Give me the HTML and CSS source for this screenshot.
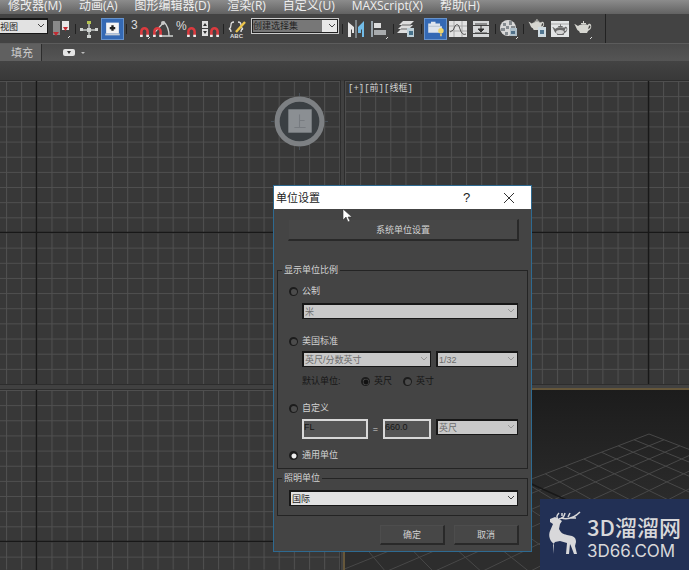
FILE: index.html
```html
<!DOCTYPE html>
<html lang="zh-CN">
<head>
<meta charset="utf-8">
<title>单位设置</title>
<link rel="stylesheet" href="styles.css">
</head>
<body>
<svg class="defs" aria-hidden="true">
  <defs>
    <symbol id="chevron" viewBox="0 0 8 6"><path d="M1 1l3 3 3-3" fill="none" stroke="currentColor"/></symbol>
    <symbol id="magnet" viewBox="0 0 8 9"><path d="M1.2 8V4a2.8 2.8 0 0 1 5.6 0v4" fill="none" stroke="#dc3a3e" stroke-width="2.3"/><path d="M0 8h2.4M5.6 8h2.4" stroke="#eee" stroke-width="2"/></symbol>
    <symbol id="teapot" viewBox="0 0 18 13"><path d="M4 5C2 4 2 3 0 3c2 1 2 6 5 7l1 2h7l1-2c2-1 4-3 3-6-1-2-3-1-3 0-2-1-8-1-10 1zm11 0c1-1 2 0 1 2l-2 1zM7 3h5V2h-2V0H9v2H7z" fill="currentColor"/></symbol>
  </defs>
</svg>

<nav class="menubar">
  <a href="#">修改器(M)</a><a href="#">动画(A)</a><a href="#">图形编辑器(D)</a><a href="#">渲染(R)</a><a href="#">自定义(U)</a><a href="#">MAXScript(X)</a><a href="#">帮助(H)</a>
</nav>

<div class="toolbar-row">
  <div class="toolbar">
    <span class="combo combo-view"><select aria-label="参考坐标系"><option>视图</option></select><svg class="chevron"><use href="#chevron"/></svg></span>
    <button class="tool" aria-label="轴点中心"><svg viewBox="0 0 22 22"><path d="M3 3h7v14H3z" fill="#898989"/><path d="M12 3h7v9h-7z" fill="#e6e6e6"/><path d="M3 14h6l-3 4zM13 9h5l-2.500 4z" fill="#c22b32"/><path d="M18 20l2-2" stroke="#ddd"/></svg></button>
    <i class="sep"></i>
    <button class="tool" aria-label="操纵"><svg viewBox="0 0 22 22"><path d="M11 4v15M3 12h16" stroke="#c4c8c6" stroke-width="1.4"/><path d="M9 10h4v4H9zM2 10h3v3H2zM17 10h3v3h-3zM9 17h4v3H9z" fill="#d0d3d1"/><path d="M9 3h4v3H9z" fill="#b5c552"/></svg></button>
    <button class="tool active" aria-label="键盘快捷键覆盖"><svg viewBox="0 0 22 22"><path d="M4 4h14v12H4z" fill="#f4f4f4"/><path d="M3 17h16" stroke="#c3cbd5" stroke-width="2"/><path d="M11 7v6M8 10h6" stroke="#222" stroke-width="2.6"/></svg></button>
    <i class="sep"></i>
    <button class="tool" aria-label="捕捉开关"><svg viewBox="0 0 22 22"><text x="2" y="11" class="glyph">3</text><use href="#magnet" x="11" y="9" width="9" height="10"/><path d="M19 21l2-2" stroke="#ddd"/></svg></button>
    <button class="tool" aria-label="角度捕捉"><svg viewBox="0 0 22 22"><path d="M3 14L12 4q5 5 5 14h4M9 18h8" fill="none" stroke="#cfd2d0" stroke-width="1.3"/><circle cx="11" cy="5" r="2" fill="#c9c9c9"/><use href="#magnet" x="1" y="9" width="9" height="10"/></svg></button>
    <button class="tool" aria-label="百分比捕捉"><svg viewBox="0 0 22 22"><text x="1" y="12" class="glyph">%</text><use href="#magnet" x="12" y="9" width="9" height="10"/></svg></button>
    <button class="tool" aria-label="微调器捕捉"><svg viewBox="0 0 22 22"><path d="M4 3h6v7H4zM4 11h6v7H4z" fill="#e0e0e0"/><path d="M5 8l2-3 2 3zM5 13l2 3 2-3z" fill="#333"/><use href="#magnet" x="12" y="9" width="9" height="10"/></svg></button>
    <i class="sep"></i>
    <button class="tool" aria-label="编辑命名选择集"><svg viewBox="0 0 22 22"><path d="M8 4Q5 4 5 7t-2 4q2 0 2 3M12 4q3 0 3 3t2 4q-2 0-2 3" fill="none" stroke="#ddd" stroke-width="1.3"/><path d="M10 14L19 4" stroke="#eec64b" stroke-width="2.4"/><text x="4" y="20" class="tiny">ABC</text></svg></button>
    <span class="combo combo-set"><select aria-label="命名选择集"><option>创建选择集</option></select><svg class="chevron"><use href="#chevron"/></svg></span>
    <i class="sep"></i>
    <button class="tool" aria-label="镜像"><svg viewBox="0 0 22 22"><path d="M3 4l6 5v6H7v-3l-1-1v8H3z" fill="#e4e4e4"/><path d="M11 2v18" stroke="#b9c7cf"/><path d="M19 3l-6 6v6h3v-3l1-1v8h2z" fill="#72bce8"/></svg></button>
    <button class="tool" aria-label="对齐"><svg viewBox="0 0 22 22"><path d="M4 3v16" stroke="#b8c7d0" stroke-width="1.5"/><path d="M6 5h7v5H6z" fill="#ddd"/><path d="M6 12h12v5H6z" fill="#a8abad"/><path d="M18 21l2-2" stroke="#ddd"/></svg></button>
    <i class="sep"></i>
    <button class="tool" aria-label="层管理器"><svg viewBox="0 0 22 22"><path d="M7 3h11l-4 4H3zM6 7h11l-4 4H2zM5 11h10l-4 4H1z" fill="#dedede"/><path d="M6 7h9M5 11h8" stroke="#666"/><path d="M11 10h7v9h-7z" fill="#bfd0d8"/><path d="M13 13h4v4h-4z" fill="#47728b"/></svg></button>
    <i class="sep"></i>
    <button class="tool active" aria-label="功能区"><svg viewBox="0 0 22 22"><path d="M3 8V5h3V3h5v2h5v3h2v7H3z" fill="#dfe5ed"/><path d="M3 8h14" stroke="#b3bfcc"/><circle cx="17" cy="13" r="3" fill="#efd66d"/><path d="M16 16h2v3h-2z" fill="#d9c078"/></svg></button>
    <button class="tool" aria-label="曲线编辑器"><svg viewBox="0 0 22 22"><path d="M2 3h18v16H2z" fill="#e2e2e2"/><path d="M2 8h18M2 13h18M7 3v16M15 3v16" stroke="#aaa"/><path d="M3 14q4-1 5-6 3-4 5 3t6 5" fill="none" stroke="#555"/></svg></button>
    <button class="tool" aria-label="图解视图"><svg viewBox="0 0 22 22"><path d="M3 3h16v4H3zM3 8h16v7H3zM3 16h16v3H3z" fill="#d5d7d8"/><path d="M5 6h12M5 15h12" stroke="#444"/><path d="M11 7v5M8 11h6l-3 3z" stroke="#333" fill="#333"/></svg></button>
    <i class="sep"></i>
    <button class="tool" aria-label="材质编辑器"><svg viewBox="0 0 22 22"><circle cx="10" cy="10" r="8" fill="#d8d8d8"/><path d="M5 5h3v3H5zM11 3h3v4h-3zM8 8h3v3H8zM3 10h4v3H3zM13 8h4v3h-4zM7 14h3v3H7z" fill="#858b90"/><path d="M12 10h7v8h-7z" fill="#aebfca"/><path d="M13 13h4v3h-4z" fill="#50718a"/><path d="M18 21l2-2" stroke="#ddd"/></svg></button>
    <i class="sep"></i>
    <button class="tool" aria-label="渲染设置"><svg viewBox="0 0 22 22"><use href="#teapot" x="2" y="1" width="17" height="12"/><path d="M12 9h8v10h-8z" fill="#cfdbe1"/><path d="M14 12h4v4h-4z" fill="#527792"/></svg></button>
    <button class="tool" aria-label="渲染帧窗口"><svg viewBox="0 0 22 22"><path d="M2 3h18v16H2z" fill="#e3e5e6"/><path d="M2 6h18" stroke="#aaa"/><g color="#686868"><use href="#teapot" x="3" y="6" width="16" height="12"/></g><ellipse cx="11" cy="14" rx="4" ry="2" fill="#d5d5d5"/></svg></button>
    <button class="tool" aria-label="渲染产品"><svg viewBox="0 0 22 22"><use href="#teapot" x="2" y="3" width="18" height="13"/><path d="M18 21l2-2" stroke="#ddd"/></svg></button>
  </div>
</div>

<div class="ribbon">
  <button class="tab">填充</button>
  <button class="ribbon-toggle" aria-label="最小化功能区"><svg viewBox="0 0 22 8"><rect width="12" height="7" rx="2" fill="#e5e5e5"/><path d="M4 2h4L6 5z" fill="#333"/><path d="M18 3h4l-2 2z" fill="#bbb"/></svg></button>
</div>
<div class="ribbon-panel"></div>

<main class="viewports">
  <section class="viewport">
    <svg class="scene"><defs><pattern id="g1" x="6" y="0" width="15.15" height="15.15" patternUnits="userSpaceOnUse"><path d="M.5 0v15.15M0 .5h15.15" class="grid-line"/></pattern></defs>
      <rect width="100%" height="100%" fill="url(#g1)"/><path d="M36.5 0v400M0 151.5h400" class="axis"/></svg>
    <svg class="viewcube" viewBox="0 0 56 56"><circle cx="28" cy="28" r="22" fill="#3a3f43" stroke="#7d8083" stroke-width="5"/><path d="M17 16h23v23H17z" fill="#8b8f93"/><path d="M28 21v13M28 27h5M23 34h11" stroke="#777b80" fill="none"/><path d="M28 0v3M28 53v3M0 28h3M53 28h3" stroke="#485058"/></svg>
  </section>
  <section class="viewport">
    <svg class="scene"><defs><pattern id="g2" x="15" y="0" width="15.15" height="15.15" patternUnits="userSpaceOnUse"><path d="M.5 0v15.15M0 .5h15.15" class="grid-line"/></pattern></defs>
      <rect width="100%" height="100%" fill="url(#g2)"/><path d="M303.500 0v400M0 151.5h400" class="axis"/></svg>
    <span class="view-label">[+][前][线框]</span>
  </section>
  <section class="viewport">
    <svg class="scene"><defs><pattern id="g3" x="6" y="0" width="15.15" height="15.15" patternUnits="userSpaceOnUse"><path d="M.5 0v15.15M0 .5h15.15" class="grid-line"/></pattern></defs>
      <rect width="100%" height="100%" fill="url(#g3)"/><path d="M36.5 0v400M0 151.5h400" class="axis"/></svg>
  </section>
  <section class="viewport perspective">
    <svg class="scene"><path id="floor" class="floor-line"/><path d="M180 91l70 32" class="axis"/></svg>
  </section>
</main>

<form class="dialog" role="dialog" aria-labelledby="dialog-title">
  <header class="titlebar">
    <h1 id="dialog-title">单位设置</h1>
    <button type="button" class="caption help" aria-label="帮助">?</button>
    <button type="button" class="caption" aria-label="关闭"><svg viewBox="0 0 10 10"><path d="M0 0l10 10M10 0L0 10" stroke="#333" fill="none"/></svg></button>
  </header>
  <div class="dialog-body">
    <button type="button" class="push system">系统单位设置</button>
    <fieldset class="scale">
      <legend>显示单位比例</legend>
      <label class="choice"><input type="radio" name="scale">公制</label>
      <div class="fields"><span class="combo off wide"><select aria-label="公制单位" disabled><option>米</option></select><svg class="chevron"><use href="#chevron"/></svg></span></div>
      <label class="choice us"><input type="radio" name="scale">美国标准</label>
      <div class="fields"><span class="combo off first"><select aria-label="美国标准单位" disabled><option>英尺/分数英寸</option></select><svg class="chevron"><use href="#chevron"/></svg></span><span class="combo off second"><select aria-label="分数精度" disabled><option>1/32</option></select><svg class="chevron"><use href="#chevron"/></svg></span></div>
      <div class="defaults"><span>默认单位:</span><label class="choice"><input type="radio" name="base" checked>英尺</label><label class="choice"><input type="radio" name="base">英寸</label></div>
      <label class="choice custom"><input type="radio" name="scale">自定义</label>
      <div class="fields custom-fields"><div class="equation"><input type="text" class="unit-name" aria-label="单位名称" value="FL"><span>=</span><input type="text" class="unit-value" aria-label="单位数值" value="660.0"></div><span class="combo off second"><select aria-label="自定义基准单位" disabled><option>英尺</option></select><svg class="chevron"><use href="#chevron"/></svg></span></div>
      <label class="choice generic"><input type="radio" name="scale" checked>通用单位</label>
    </fieldset>
    <fieldset class="lighting">
      <legend>照明单位</legend>
      <span class="combo wide"><select aria-label="照明单位"><option>国际</option></select><svg class="chevron"><use href="#chevron"/></svg></span>
    </fieldset>
    <footer class="actions"><button type="button" class="push">确定</button><button type="button" class="push">取消</button></footer>
  </div>
</form>

<svg class="pointer" viewBox="0 0 10 15" aria-hidden="true"><path d="M1 1v11l3-3 2 5 2-1-2-4h4z" fill="#fff" stroke="#333" stroke-width=".6"/></svg>

<aside class="brand">
  <svg class="deer" viewBox="0 0 34 46" aria-hidden="true"><path d="M2 8l5-2 4 2 3 2-2 3-1 5c2 4 4 5 8 6l5 1c3 1 4 3 4 6l-1 4 2 8h-3l-3-8-1-2-1 10h-3l1-11-7-2-5 1-2 3v9H5l1-10c-4-3-6-8-4-13l3-7-3-2z" fill="#d8d8da"/><path d="M10 8C8 6 9 4 11 2M11 8c5-1 5-3 6-6M13 7c7 2 13 0 19-6M20 6l2-4M23 7l5 0M14 5V2" fill="none" stroke="#d8d8da" stroke-width="1.5"/></svg>
  <div class="brand-text"><strong>3D溜溜网</strong><span>3D66.COM</span></div>
</aside>
<script src="floor.js"></script>
</body>
</html>
```
FILE: styles.css
```css
* { box-sizing: border-box; }

body {
  margin: 0;
  min-height: 100vh;
  display: flex;
  flex-direction: column;
  position: relative;
  overflow: hidden;
  background: #414141;
  color: #d2d2d2;
  font: 9px/14px "Liberation Sans", "Noto Sans CJK SC", sans-serif;
}

button, select, input { font: inherit; color: inherit; margin: 0; padding: 0; border: 0; border-radius: 0; }
svg { display: block; }
.defs { position: absolute; width: 0; height: 0; }

.menubar {
  display: flex;
  gap: 17px;
  height: 14px;
  padding-left: 8px;
  background: linear-gradient(#8c8c8c, #626262);
  font: 12px/12px "Open Sans", "Noto Sans CJK SC", sans-serif;
}
.menubar a { color: #eee; text-decoration: none; white-space: nowrap; }

.toolbar-row { display: flex; background: #434343; border-bottom: 1px solid #5c5c5c; }
.toolbar { display: flex; height: 29px; padding: 4px 10px 0 0; border-right: 1px solid #222; }
.tool { width: 23px; height: 22px; flex: none; background: none; color: #d6d6d0; }
.tool svg { width: 22px; height: 22px; }
.tool.active { background: #3469b4; border: 1px solid #6793cc; }
.tool.active svg { width: 21px; height: 20px; }
.glyph { font: 12px "Liberation Sans", sans-serif; fill: #ddd; }
.tiny { font: bold 6px "Liberation Sans", sans-serif; fill: #ddd; }
.sep { width: 1px; height: 10px; margin: 6px 2px; background: #222; flex: none; }

.combo { position: relative; display: block; color: #222; }
.combo select {
  display: block;
  width: 100%;
  height: 16px;
  padding-left: 1px;
  appearance: none;
  background: #e2e2e2;
  border: solid #171717;
  border-width: 2px 1px 1px 2px;
}
.combo .chevron { position: absolute; right: 3px; top: 5px; width: 8px; height: 6px; color: #444; pointer-events: none; }
.combo.off select { background: #c9c9c9; color: #6c6c6c; opacity: 1; }
.combo.off .chevron { color: #999; }
.combo-view { width: 48px; margin-right: 2px; }
.combo-view select { border-left: 0; padding-left: 0; }
.combo-set { width: 88px; margin: 0 1px 0 2px; }
.combo-set select { background: linear-gradient(90deg, #777 70px, #e8e8e8 70px); border: 1px solid #ccc; outline: 1px solid #222; outline-offset: -2px; }

.ribbon { display: flex; height: 17px; background: linear-gradient(#4a4a4a, #555); }
.tab { width: 42px; padding-left: 3px; background: #606060; border-right: 1px solid #2d2d2d; color: #ccc; font-size: 11px; line-height: 16px; }
.ribbon-toggle { margin-left: 21px; width: 22px; background: none; }
.ribbon-toggle svg { width: 22px; height: 8px; }
.ribbon-panel { height: 20px; background: linear-gradient(#434343, #383838); }

.viewports { flex: 1; display: grid; grid-template: 304fr 180fr / 340fr 344fr; gap: 6px 5px; }
.viewport { position: relative; min-width: 0; overflow: hidden; background: #383838; outline: 1px solid #2d2d2d; }
.scene { position: absolute; inset: 0; width: 100%; height: 100%; }
.grid-line { stroke: #505050; fill: none; }
.axis { stroke: #181818; stroke-width: 1.5; fill: none; }
.floor-line { stroke: #484848; fill: none; }
.perspective { background: linear-gradient(#1c1c1c, #2d2d2d 70%); outline: 2px solid #66573a; }
.viewcube { position: absolute; right: 12px; top: 12px; width: 57px; height: 57px; }
.view-label { position: absolute; left: 3px; top: 1px; font: 9px/14px "Liberation Mono", "Noto Sans CJK SC", monospace; }

.dialog { position: absolute; left: 273px; top: 185px; width: 259px; background: #444; border: 1px solid #2e6a91; }
.titlebar { display: flex; align-items: center; height: 23px; padding: 0 16px 0 2px; background: #fff; color: #222; }
.titlebar h1 { flex: 1; margin: 0; font-size: 11px; font-weight: 400; }
.caption { width: 11px; background: none; }
.caption svg { width: 10px; height: 10px; }
.help { margin-right: 32px; font-size: 13px; }
.dialog-body { padding: 10px 3px 6px; }

.push { height: 20px; background: #474747; border: solid; border-color: #4d4d4d #292929 #292929 #4d4d4d; border-width: 1px 2px 2px 1px; }
.system { display: block; width: 231px; height: 22px; margin: 0 0 23px 11px; border-color: #444 #292929 #292929 #444; }

fieldset { margin: 0; padding: 0 9px 0 11px; border: 1px solid #242424; min-width: 0; }
legend { margin-left: -7px; padding: 0 2px; line-height: 12px; height: 12px; }
.scale { padding-top: 8px; padding-bottom: 6px; }
.choice { display: flex; align-items: center; gap: 4px; height: 14px; }
.choice input { appearance: none; width: 9px; height: 9px; border-radius: 50%; background: #4c4c4c; border: solid #1c1c1c; border-width: 2px 1px 1px 2px; }
.choice input:checked { background: radial-gradient(#eee 0 2px, #222 3px); }
.fields { display: flex; justify-content: space-between; margin: 5px 0 0 13px; }
.wide { flex: 1; }
.first { width: 129px; }
.second { width: 82px; }
.us { margin-top: 15px; }
.us + .fields { margin-top: 3px; }
.defaults { display: flex; margin: 7px 0 0 13px; color: #161616; }
.defaults span { width: 59px; }
.defaults .choice { width: 42px; }
.defaults input:checked { background: radial-gradient(#111 0 2px, #555 3px); }
.custom { margin-top: 13px; }
.custom-fields { margin-top: 4px; }
.equation { display: flex; width: 129px; justify-content: space-between; align-items: center; }
.equation input { height: 20px; padding: 0 0 5px; background: #555; color: #161616; border: 2px solid #d8d8d8; }
.unit-name { width: 66px; }
.unit-value { width: 48px; }
.generic { margin-top: 9px; }
.lighting { margin-top: 3px; padding: 6px 9px 9px 11px; }
.actions { display: flex; justify-content: flex-end; gap: 9px; padding: 9px 9px 0 0; }
.actions .push { width: 65px; }

.pointer { position: absolute; left: 342px; top: 208px; width: 10px; height: 15px; }

.brand { position: absolute; right: 0; bottom: 0; display: flex; gap: 5px; width: 149px; height: 71px; padding: 12px 8px; background: #223055; color: #d8d8da; }
.deer { width: 34px; height: 46px; }
.brand-text { display: flex; flex-direction: column; white-space: nowrap; }
.brand strong { font: 500 22px/30px "Noto Sans CJK SC", sans-serif; }
.brand span { font: 17px/20px Inter, sans-serif; }
```
FILE: floor.js
```js
// Perspective ground plane: a square of 14 x 14 cells seen from one corner.
const APEX = { x: 304, y: 44 };
const CELLS = 14;

function project(i, j) {
  const depth = 1 - 0.026 * (i + j);
  return `${APEX.x + (j - i) * 14.6 / depth} ${APEX.y + (i + j) * 5.6 / depth}`;
}

let path = "";
for (let n = 0; n <= CELLS; n++) {
  path += `M${project(n, 0)}L${project(n, CELLS)}M${project(0, n)}L${project(CELLS, n)}`;
}
document.getElementById("floor").setAttribute("d", path);
```
